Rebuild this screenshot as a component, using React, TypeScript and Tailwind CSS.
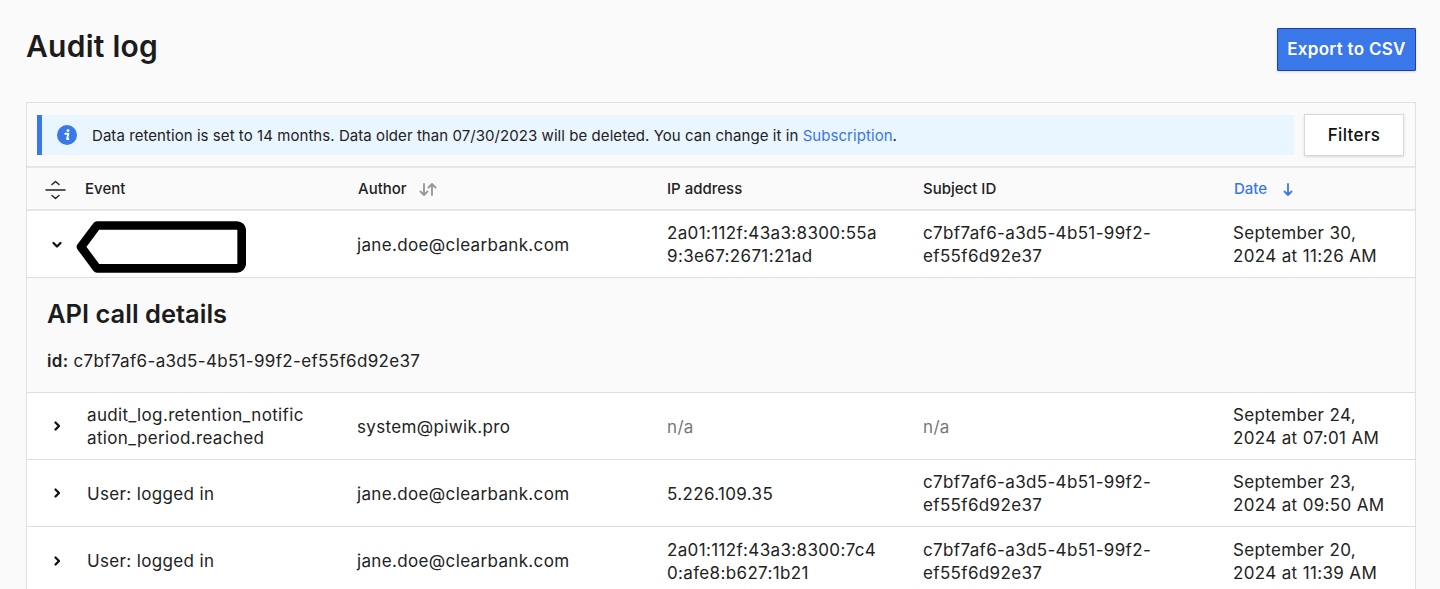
import React from "react";

const Chev = ({ down }: { down?: boolean }) => (
  <svg width="12" height="12" viewBox="0 0 12 12" fill="none" stroke="#111" strokeWidth="2.3" strokeLinecap="round" strokeLinejoin="round">
    {down ? <path d="M2.500 5 6 8.500 9.500 5" /> : <path d="M4.500 2.500 8 6 4.500 9.500" />}
  </svg>
);

const Row = ({ event, author, ip, subject, date, down, border = true }: { event: React.ReactNode; author: string; ip: string; subject: string; date: string; down?: boolean; border?: boolean }) => {
  const muted = ip === "n/a";
  return (
    <div className={`flex h-[67px] items-center bg-white text-[17px] leading-[23px] tracking-[0.35px] text-[#222] ${border ? "border-b border-[#dedede]" : ""}`}>
      <div className="flex w-[60px] shrink-0 justify-end pr-[24px]"><Chev down={down} /></div>
      <div className="w-[270px] shrink-0 pr-[48px] pt-[2px] break-all">{event}</div>
      <div className="w-[310px] shrink-0 pt-[2px]">{author}</div>
      <div className={`w-[256px] shrink-0 pr-[40px] pt-[2px] break-all ${muted ? "text-[#777]" : ""}`}>{ip}</div>
      <div className={`w-[310px] shrink-0 pr-[70px] pt-[2px] ${muted ? "text-[#777]" : ""}`}>{subject}</div>
      <div className="w-[182px] shrink-0 pr-[22px] pt-[2px]">{date}</div>
    </div>
  );
};

export default function App() {
  return (
    <div className="h-[589px] overflow-hidden bg-[#fafafa] pl-[26px] pr-[24px] font-['Inter',sans-serif] text-[#222]">
      <div className="flex items-start justify-between pt-[28px]">
        <h1 className="text-[30px] leading-[36px] font-semibold tracking-[0.25px] text-[#1c1c1c]">Audit log</h1>
        <button className="h-[43px] w-[139px] rounded-[1px] border border-[#1e3fae] bg-[#3a77e8] text-[17px] font-semibold tracking-[0.3px] text-white shadow-sm">Export to CSV</button>
      </div>
      <div className="mt-[31px] border border-[#e0e0e0] bg-[#fafafa]">
        <div className="flex h-[65px] items-center gap-[10px] border-b-2 border-[#e6e6e6] pl-[10px] pr-[10px] pt-[1px]">
          <div className="flex h-[40px] w-[1257px] items-center border-l-[5px] border-[#3a77e8] bg-[#e9f5ff] pl-[15px] text-[15px] tracking-[0.06px] text-[#222]">
            <svg width="20" height="20" viewBox="0 0 20 20" className="mr-[15px] shrink-0">
              <circle cx="10" cy="10" r="10" fill="#3a77e8" />
              <circle cx="11" cy="5.600" r="1.400" fill="#fff" />
              <path d="M8.200 8.800h3.200l-1.300 5.200h1.300" fill="none" stroke="#fff" strokeWidth="1.900" strokeLinecap="round" strokeLinejoin="round" />
            </svg>
            <span className="pt-[2px]">Data retention is set to 14 months. Data older than 07/30/2023 will be deleted. You can change it in <span className="text-[#3a77e8]">Subscription</span>.</span>
          </div>
          <button className="h-[42px] w-[100px] border border-[#d8d8d8] bg-white pt-[2px] text-[17px] font-medium tracking-[0.35px] text-[#111] shadow-sm">Filters</button>
        </div>
        <div className="flex h-[43px] items-center border-b-2 border-[#e6e6e6] pt-[2px] text-[15px] font-medium text-[#222]">
          <div className="flex w-[58px] shrink-0 pl-[18px]">
            <svg width="21" height="20" viewBox="0 0 21 20" fill="none" stroke="#222" strokeWidth="1.500" strokeLinecap="round" strokeLinejoin="round">
              <path d="M1 10h19M7 4.500 10.500 1.500 14 4.500M7 15.500l3.500 3 3.500-3" />
            </svg>
          </div>
          <div className="w-[273px] shrink-0">Event</div>
          <div className="flex w-[309px] shrink-0 items-center gap-[12px]">
            <span>Author</span>
            <svg width="18" height="13" viewBox="0 0 18 13" fill="none" stroke="#999" strokeWidth="1.900" strokeLinecap="round" strokeLinejoin="round">
              <path d="M5 1v11M1.500 8.500 5 12l3.500-3.500M13 12V1M9.500 4.500 13 1l3.500 3.500" />
            </svg>
          </div>
          <div className="w-[256px] shrink-0">IP address</div>
          <div className="w-[311px] shrink-0">Subject ID</div>
          <div className="flex items-center gap-[16px] text-[#3a77e8]">
            <span>Date</span>
            <svg width="10" height="13" viewBox="0 0 10 13" fill="none" stroke="#3a77e8" strokeWidth="1.800" strokeLinecap="round" strokeLinejoin="round">
              <path d="M5 1v11M1.500 8.500 5 12l3.500-3.500" />
            </svg>
          </div>
        </div>
        <Row
          down
          event={
            <svg width="170" height="52" viewBox="0 0 170 52" className="-ml-[11px] block translate-y-[2px]">
              <path d="M21 4.500h140a4.700 4.700 0 0 1 4.700 4.700v33.400a4.700 4.700 0 0 1-4.700 4.700H21L5 25.800Z" fill="#fff" stroke="#000" strokeWidth="8.700" strokeLinejoin="round" />
            </svg>
          }
          author="jane.doe@clearbank.com"
          ip="2a01:112f:43a3:8300:55a9:3e67:2671:21ad"
          subject="c7bf7af6-a3d5-4b51-99f2-ef55f6d92e37"
          date="September 30, 2024 at 11:26 AM"
        />
        <div className="h-[115px] border-b border-[#dedede] bg-[#fafafa] pl-[20px] pt-[20px]">
          <h2 className="text-[25.500px] leading-[32px] font-semibold text-[#1c1c1c]">API call details</h2>
          <p className="mt-[20px] text-[17px] leading-[23px] tracking-[0.33px] text-[#222]"><span className="font-semibold">id:</span> c7bf7af6-a3d5-4b51-99f2-ef55f6d92e37</p>
        </div>
        <Row event="audit_log.retention_notification_period.reached" author="system@piwik.pro" ip="n/a" subject="n/a" date="September 24, 2024 at 07:01 AM" />
        <Row event="User: logged in" author="jane.doe@clearbank.com" ip="5.226.109.35" subject="c7bf7af6-a3d5-4b51-99f2-ef55f6d92e37" date="September 23, 2024 at 09:50 AM" />
        <Row event="User: logged in" author="jane.doe@clearbank.com" ip="2a01:112f:43a3:8300:7c40:afe8:b627:1b21" subject="c7bf7af6-a3d5-4b51-99f2-ef55f6d92e37" date="September 20, 2024 at 11:39 AM" border={false} />
      </div>
    </div>
  );
}
